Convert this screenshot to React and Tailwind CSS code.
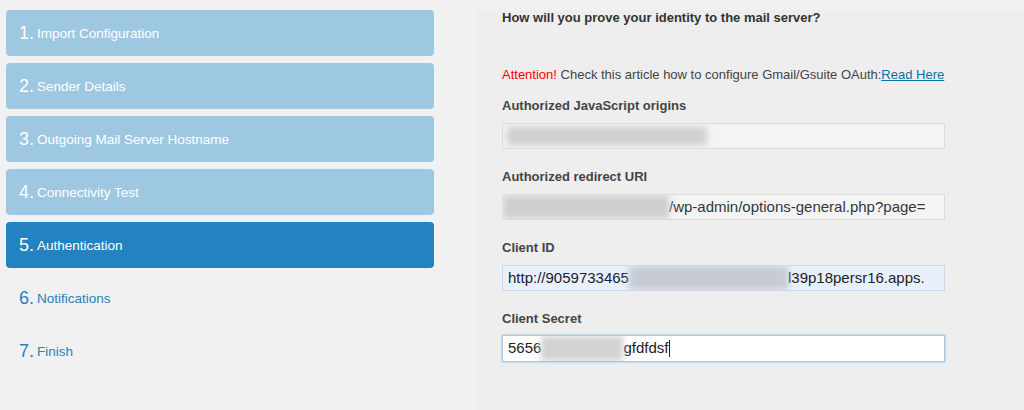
import React from "react";

const STEPS = [
  { n: 1, label: "Import Configuration", state: "done" },
  { n: 2, label: "Sender Details", state: "done" },
  { n: 3, label: "Outgoing Mail Server Hostname", state: "done" },
  { n: 4, label: "Connectivity Test", state: "done" },
  { n: 5, label: "Authentication", state: "active" },
  { n: 6, label: "Notifications", state: "todo" },
  { n: 7, label: "Finish", state: "todo" },
];

function Step({ step }) {
  const box =
    step.state === "active"
      ? "bg-[#2283c0] text-white"
      : step.state === "done"
      ? "bg-[#9ec8e2] text-white"
      : "text-[#2283c0]";
  return (
    <div className={`h-[46px] rounded-[4px] flex items-center pl-[13px] ${box}`}>
      <span className="text-[18px] leading-none mr-[3px]">{step.n}.</span>
      <span className="text-[13.5px] leading-none mt-[2px]">{step.label}</span>
    </div>
  );
}

function Label({ children }) {
  return <div className="text-[13px] leading-5 font-bold text-[#444]">{children}</div>;
}

export default function App() {
  return (
    <div
      className="w-[1024px] h-[410px] bg-[#f1f1f1] flex overflow-hidden"
      style={{ fontFamily: '"Liberation Sans", Arial, sans-serif' }}
    >
      {/* Wizard steps */}
      <div className="w-[434px] pl-[6px] pt-[10px] flex flex-col gap-[7px] shrink-0">
        {STEPS.map((s) => (
          <Step key={s.n} step={s} />
        ))}
      </div>

      {/* Authentication form */}
      <div className="flex-1 min-w-0 mt-[10px] ml-[43px] bg-[#eeeeee] pl-[25px]">
        <div className="text-[13px] leading-4 font-bold text-[#333]">
          How will you prove your identity to the mail server?
        </div>

        <div className="mt-[39px] text-[13px] leading-5 text-[#444]">
          <span className="text-[#ff0000]">Attention!</span> Check this article how to configure
          Gmail/Gsuite OAuth:
          <span className="text-[#0073aa] underline">Read Here</span>
        </div>

        <div className="mt-[11px] w-[443px]">
          <Label>Authorized JavaScript origins</Label>
          <div className="mt-[7px] h-[26px] border border-[#dcdcdc] bg-[#f4f4f4] flex items-center overflow-hidden pl-[4px]">
            <span className="h-[18px] w-[200px] shrink-0 bg-[#cfcfcf] blur-[3px] rounded-[2px]" />
          </div>
        </div>

        <div className="mt-[18px] w-[443px]">
          <Label>Authorized redirect URI</Label>
          <div className="mt-[7px] h-[26px] border border-[#dcdcdc] bg-[#f4f4f4] flex items-center overflow-hidden whitespace-nowrap text-[15px] text-[#32373c]">
            <span className="h-full w-[166px] shrink-0 bg-[#cfcfcf] blur-[3px]" />
            <span>/wp-admin/options-general.php?page=</span>
          </div>
        </div>

        <div className="mt-[18px] w-[443px]">
          <Label>Client ID</Label>
          <div className="mt-[7px] h-[26px] border border-[#cdd7e6] bg-[#e8f0fe] flex items-center overflow-hidden whitespace-nowrap text-[15px] text-[#222] pl-[5px]">
            <span>http://9059733465</span>
            <span className="h-full w-[159px] shrink-0 bg-[#c6cbd4] blur-[3px]" />
            <span>l39p18persr16.apps.</span>
          </div>
        </div>

        <div className="mt-[18px] w-[443px]">
          <Label>Client Secret</Label>
          <div className="mt-[6px] h-[27px] border border-[#a9c7dd] bg-white flex items-center overflow-hidden whitespace-nowrap text-[15px] text-[#222] pl-[5px] shadow-[0_0_2px_rgba(30,140,190,0.5)]">
            <span>5656</span>
            <span className="h-full w-[82px] shrink-0 bg-[#d2d2d2] blur-[3px]" />
            <span>gfdfdsf</span>
            <span className="w-px h-[17px] bg-[#222] ml-px" />
          </div>
        </div>
      </div>
    </div>
  );
}
